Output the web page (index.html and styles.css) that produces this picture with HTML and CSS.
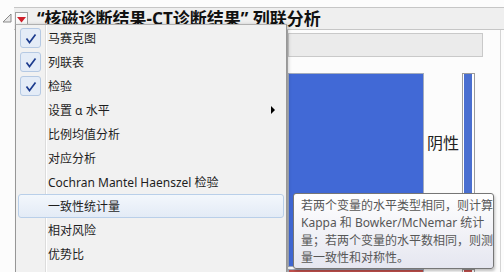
FILE: index.html
```html
<!DOCTYPE html>
<html lang="zh-CN">
<head>
  <meta charset="UTF-8" />
  <title>列联分析</title>
  <link rel="stylesheet" href="styles.css">
</head>
<body>

<div class="report">
  <div class="title-row">
    <svg class="collapse" width="14" height="23" viewBox="0 0 14 23">
      <polygon points="11,8 11,16 3,16" fill="#e8e8e8" stroke="#8a8a8a" stroke-width="1" />
    </svg>
    <div class="title-bar">
      <span class="menu-btn">
        <svg width="9" height="6" viewBox="0 0 9 6"><polygon points="0,0 9,0 4.5,5.5" fill="#d0202a" /></svg>
      </span>
      <h1 class="title">“核磁诊断结果-CT诊断结果” 列联分析</h1>
    </div>
  </div>

  <div class="panel">
    <div class="legend-box"></div>
    <div class="chart">
      <div class="bar-row">
        <div class="bar bar-blue"></div>
        <span class="bar-label">阴性</span>
        <div class="slim"><div class="slim-fill"></div></div>
      </div>
      <div class="bar-row">
        <div class="bar bar-red"></div>
        <span class="bar-label"></span>
        <div class="slim"><div class="slim-fill red"></div></div>
      </div>
    </div>
  </div>
</div>

<ul class="menu">
  <li class="item"><span class="check"><svg width="12" height="11" viewBox="0 0 12 11"><path d="M1.5 5.5 L4.5 9.5 L10.5 1.5" fill="none" stroke="#1d3c8e" stroke-width="1.7" /></svg></span>马赛克图</li>
  <li class="item"><span class="check"><svg width="12" height="11" viewBox="0 0 12 11"><path d="M1.5 5.5 L4.5 9.5 L10.5 1.5" fill="none" stroke="#1d3c8e" stroke-width="1.7" /></svg></span>列联表</li>
  <li class="item"><span class="check"><svg width="12" height="11" viewBox="0 0 12 11"><path d="M1.5 5.5 L4.5 9.5 L10.5 1.5" fill="none" stroke="#1d3c8e" stroke-width="1.7" /></svg></span>检验</li>
  <li class="item"><span class="check blank"></span>设置 α 水平<span class="sub-arrow"></span></li>
  <li class="item"><span class="check blank"></span>比例均值分析</li>
  <li class="item"><span class="check blank"></span>对应分析</li>
  <li class="item"><span class="check blank"></span>Cochran Mantel Haenszel 检验</li>
  <li class="item active"><span class="check blank"></span>一致性统计量</li>
  <li class="item"><span class="check blank"></span>相对风险</li>
  <li class="item"><span class="check blank"></span>优势比</li>
</ul>

<div class="tooltip">
  <span class="tip-line">若两个变量的水平类型相同，则计算</span>
  <span class="tip-line">Kappa 和 Bowker/McNemar 统计</span>
  <span class="tip-line">量；若两个变量的水平数相同，则测</span>
  <span class="tip-line">量一致性和对称性。</span>
</div>

</body>
</html>
```

FILE: styles.css
```css
:root {
  --bg: #fcfcfc;
  --title-bg: #efefef;
  --line: #c6c6c6;
  --menu-bg: #f1f1f1;
  --menu-border: #979797;
  --text-main: #1e1e1e;
  --tip-text: #575757;
  --bar-blue: #4169d6;
  --bar-red: #c0504d;
}

* {
  margin: 0;
  padding: 0;
  box-sizing: border-box;
}

body {
  font-family: "Noto Sans", "Noto Sans CJK SC", sans-serif;
  background: var(--bg);
  color: var(--text-main);
  width: 504px;
  height: 272px;
  overflow: hidden;
  position: relative;
}

.report {
  padding-top: 7px;
}

.title-row {
  display: flex;
  height: 23px;
}

.collapse {
  flex: none;
  margin-top: -1px;
}

.title-bar {
  flex: 1;
  display: flex;
  align-items: flex-start;
  background: var(--title-bg);
  border-top: 1px solid var(--line);
  border-bottom: 1px solid var(--line);
}

.menu-btn {
  margin-left: 1px;
  margin-top: 4px;
  width: 13px;
  height: 18px;
  border: 1px solid #a0a0a0;
  border-bottom: none;
  background: #fafafa;
  display: flex;
  justify-content: center;
  padding-top: 4px;
}

.menu-btn svg {
  display: block;
}

.title {
  margin-left: 9px;
  font-size: 17px;
  line-height: 21px;
  font-weight: bold;
  color: #111;
  white-space: nowrap;
  font-family: "Noto Sans", "Noto Sans CJK SC", sans-serif;
}

.panel {
  margin-left: 287px;
  margin-right: 3px;
  height: 242px;
  overflow: hidden;
  border-left: 1px solid #b4b4b4;
  border-right: 1px solid #d4d4d4;
  padding-top: 3px;
}

.legend-box {
  width: 195px;
  height: 24px;
  background: #ebebeb;
  border: 1px solid #c9c9c9;
}

.chart {
  margin-top: 16px;
}

.bar-row {
  display: flex;
  height: 194px;
  margin-bottom: 2px;
}

.bar {
  width: 136px;
  border: 1px solid #a3acbd;
}

.bar-blue {
  background: var(--bar-blue);
}

.bar-red {
  background: var(--bar-red);
}

.bar-label {
  width: 38px;
  padding-top: 58px;
  padding-left: 3px;
  font-size: 16px;
  line-height: 22px;
  color: #222;
  font-family: "Noto Sans CJK SC", sans-serif;
}

.slim {
  width: 13px;
  border: 1px solid #9c9c9c;
  background: #fff;
  padding: 0 2px 0 1px;
}

.slim-fill {
  height: 100%;
  background: #4a6fd0;
}

.slim-fill.red {
  background: var(--bar-red);
}

/* dropdown menu */
.menu {
  position: absolute;
  left: 15px;
  top: 24px;
  width: 272px;
  height: 248px;
  list-style: none;
  padding: 1px;
  background-color: var(--menu-bg);
  background-image: linear-gradient(to right, transparent 29px, #dcdcdc 29px, #dcdcdc 30px, #fff 30px, #fff 31px, transparent 31px);
  border: 1px solid var(--menu-border);
  border-top-color: #b0b0b0;
  border-bottom: none;
  box-shadow: 2px 0 3px rgba(0, 0, 0, 0.15);
}

.item {
  display: flex;
  align-items: center;
  height: 24px;
  margin: 0 1px;
  padding-left: 1px;
  border: 1px solid transparent;
  border-radius: 3px;
  font-size: 12px;
  white-space: nowrap;
}

.item.active {
  background: linear-gradient(#f3f7fc, #e3ebf6);
  border-color: #b9cfe9;
}

.check {
  flex: none;
  width: 21px;
  height: 20px;
  margin-right: 7px;
  border: 1px solid #b5c9e3;
  border-radius: 3px;
  background: #e4ecf7;
  display: flex;
  align-items: center;
  justify-content: center;
}

.check.blank {
  border-color: transparent;
  background: none;
}

.sub-arrow {
  margin-left: auto;
  margin-right: 8px;
  width: 0;
  height: 0;
  border-top: 4px solid transparent;
  border-bottom: 4px solid transparent;
  border-left: 4px solid #000;
}

/* tooltip */
.tooltip {
  position: absolute;
  left: 293px;
  top: 193px;
  width: 201px;
  height: 76px;
  padding: 3px 0 0 7px;
  background: linear-gradient(#ffffff, #e5e6f0);
  border: 1px solid #767676;
  border-radius: 3px;
  box-shadow: 1px 2px 3px rgba(0, 0, 0, 0.25);
  color: var(--tip-text);
  font-size: 12px;
  line-height: 17.3px;
}

.tip-line {
  display: block;
  white-space: nowrap;
}
```
